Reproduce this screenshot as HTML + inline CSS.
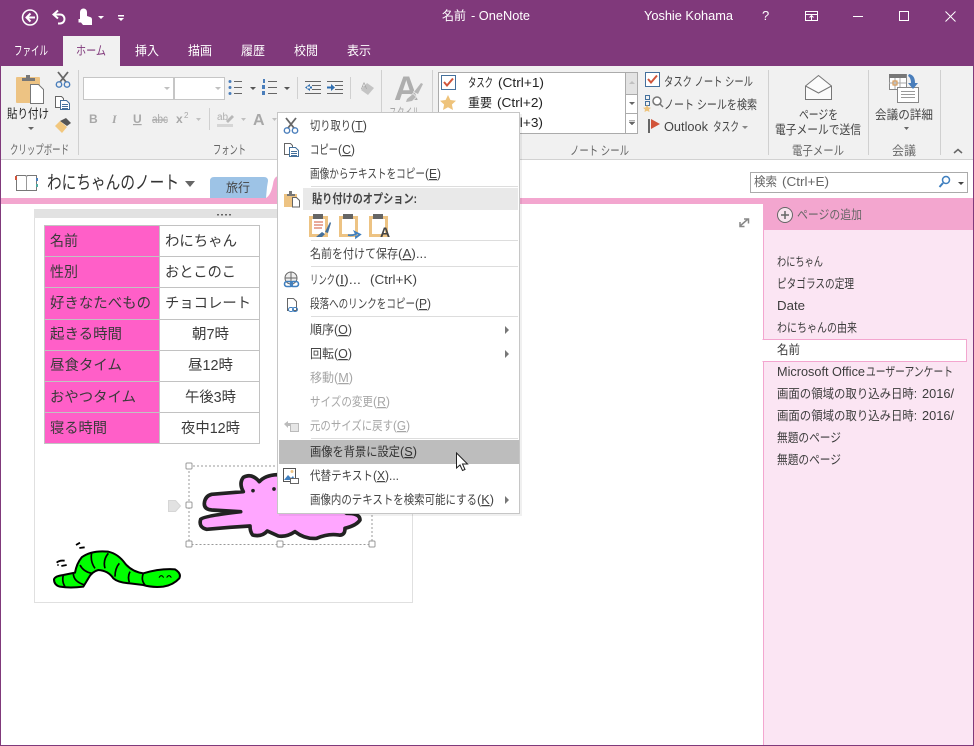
<!DOCTYPE html>
<html lang="ja"><head><meta charset="utf-8"><title>名前 - OneNote</title>
<style>
html,body{margin:0;padding:0;background:#fff;width:974px;height:746px;overflow:hidden}
svg{display:block}
text{font-family:"Liberation Sans","Noto Sans CJK JP",sans-serif;font-size:12.5px;fill:#444;white-space:pre}
.w{fill:#fff}.d{fill:#a6a6a6}.k{fill:#222}.g{fill:#666}.tb{font-size:14.5px;fill:#3a3a3a}.p{fill:#3c3c3c}
.u{text-decoration:underline}
</style></head><body>
<svg width="974" height="746" viewBox="0 0 974 746" xmlns="http://www.w3.org/2000/svg">
<defs>
<g id="sc"><path d="M2 0L10 10M12 0L4 10" stroke="#666" stroke-width="1.8" fill="none"/><circle cx="3" cy="12.5" r="2.7" fill="none" stroke="#4a7ebb" stroke-width="1.4"/><circle cx="11" cy="12.5" r="2.7" fill="none" stroke="#4a7ebb" stroke-width="1.4"/></g>
<g id="cp" fill="#fff" stroke="#666"><path d="M.5.5h6l2 2v9h-8z"/><path d="M5.5 4.500h6l3 3v6h-9z" stroke="#44709c"/><path d="M7 8.500h6M7 10.500h6M7 12.500h6" stroke="#44709c"/></g>
</defs>
<!-- title -->
<rect width="974" height="746" fill="#80397b"/>
<rect x="1" y="66" width="972" height="679" fill="#fff"/>
<g fill="none" stroke="#fff" stroke-width="1.500">
<circle cx="30" cy="17.500" r="7.500"/><path d="M35 17.500h-8M30.500 13.500l-4 4 4 4" stroke-width="2"/>
<path d="M58 10.500l-4.500 4 4.500 4M54 14.500h6c6 0 6 9 0 9h-2" stroke-width="2"/>
</g>
<path d="M80 19v-7a3 3 0 0 1 7 0v4l3 1c2 .5 2 2 2 3v5h-9l-2-2.500h-2.500v-3.500z" fill="#fff"/>
<path d="M98 16h6l-3 3zM118 15h6v1.500h-6zM118 18h6l-3 3z" fill="#fff"/>
<text class="w" x="442" y="20" textLength="24" lengthAdjust="spacingAndGlyphs">名前</text>
<text class="w" x="471" y="20" textLength="59" lengthAdjust="spacingAndGlyphs">- OneNote</text>
<text class="w" x="644" y="20" textLength="89" lengthAdjust="spacingAndGlyphs">Yoshie Kohama</text>
<text class="w" x="762" y="20" style="font-size:13px">?</text>
<g fill="none" stroke="#fff"><rect x="805.500" y="11.500" width="12" height="9"/><path d="M805 14.500h13M811.500 20v-4M809.500 17.500l2-2 2 2"/>
<path d="M853 16.500h10"/><rect x="899.500" y="11.500" width="9" height="9"/><path d="M945.500 11.500l10 10M955.500 11.500l-10 10"/></g>
<!-- tabs -->
<rect x="63" y="36" width="57" height="30" fill="#f1f1f1"/>
<text class="w" x="14" y="55" textLength="34" lengthAdjust="spacingAndGlyphs">ファイル</text>
<text x="76" y="55" textLength="30" lengthAdjust="spacingAndGlyphs" style="fill:#80397b">ホーム</text>
<text class="w" x="135" y="55" textLength="24" lengthAdjust="spacingAndGlyphs">挿入</text>
<text class="w" x="188" y="55" textLength="24" lengthAdjust="spacingAndGlyphs">描画</text>
<text class="w" x="241" y="55" textLength="24" lengthAdjust="spacingAndGlyphs">履歴</text>
<text class="w" x="294" y="55" textLength="24" lengthAdjust="spacingAndGlyphs">校閲</text>
<text class="w" x="347" y="55" textLength="24" lengthAdjust="spacingAndGlyphs">表示</text>
<!-- ribbon -->
<rect x="1" y="66" width="972" height="93" fill="#f1f1f1"/>
<rect x="1" y="159" width="972" height="1" fill="#d2d2d2"/>
<g fill="#d0d0d0"><rect x="78" y="70" width="1" height="85"/><rect x="432" y="70" width="1" height="85"/><rect x="768" y="70" width="1" height="85"/><rect x="868" y="70" width="1" height="85"/><rect x="940" y="70" width="1" height="85"/><rect x="297" y="77" width="1" height="22"/><rect x="350" y="77" width="1" height="22"/><rect x="381" y="70" width="1" height="85"/><rect x="209" y="108" width="1" height="22"/></g>
<!-- clipboard -->
<rect x="16" y="77" width="24" height="26" rx="1" fill="#edc383"/>
<path d="M22 81v-3h4v-3h4v3h5v3z" fill="#777"/>
<path d="M30.500 84.500h8l5 5v14h-13z" fill="#fff" stroke="#777"/>
<text class="k" x="7" y="118" textLength="42" lengthAdjust="spacingAndGlyphs">貼り付け</text>
<path d="M28 127h6l-3 3z" fill="#666"/>
<use href="#sc" x="56" y="72"/>
<use href="#cp" x="55" y="96"/>
<path d="M60 121l6-3 5 5-4 3z" fill="#555"/><path d="M55 126l5-5 7 6-5 6z" fill="#f2c77e"/>
<text class="g" x="10" y="154" textLength="59" lengthAdjust="spacingAndGlyphs">クリップボード</text>
<text class="g" x="213" y="154" textLength="33" lengthAdjust="spacingAndGlyphs">フォント</text>
<text class="g" x="570" y="155" textLength="59" lengthAdjust="spacingAndGlyphs">ノート シール</text>
<text class="g" x="792" y="155" textLength="52" lengthAdjust="spacingAndGlyphs">電子メール</text>
<text class="g" x="892" y="155" textLength="24" lengthAdjust="spacingAndGlyphs">会議</text>
<!-- font boxes -->
<rect x="83.500" y="77.500" width="90" height="22" fill="#fff" stroke="#c6c6c6"/>
<rect x="174.500" y="77.500" width="50" height="22" fill="#fff" stroke="#c6c6c6"/>
<path d="M164 87h6l-3 3zM215 87h6l-3 3z" fill="#c0c0c0"/>
<g fill="#4a7ebb"><circle cx="230" cy="81.500" r="1.500"/><circle cx="230" cy="87.500" r="1.500"/><circle cx="230" cy="93.500" r="1.500"/></g>
<path d="M234 81.500h8M234 87.500h8M234 93.500h8M268 81.500h9M268 87.500h9M268 93.500h9" stroke="#666"/>
<path d="M250 87h6l-3 3zM284 87h6l-3 3z" fill="#555"/>
<g fill="#4a7ebb"><rect x="263" y="79" width="2" height="4"/><rect x="262" y="85" width="3" height="4"/><rect x="262" y="91" width="3" height="4"/></g>
<path d="M312 85.500h9M312 89.500h9M335 85.500h8M335 89.500h8M327 81.500h16M327 93.500h16M305 81.500h16M305 93.500h16" stroke="#666"/>
<path d="M310 84l-5 3.500 5 3.500zM307 86.500h5v2h-5zM327 86.500h5v2h-5zM331 84l4 3.500-4 3.500z" fill="#2f6eb0"/>
<path d="M361 90l6-7 7 5-6 7z" fill="#c4c4c4"/><text x="361" y="89" style="font-size:9px;fill:#aaa">A</text>
<text x="89" y="123" style="font-weight:bold;fill:#a8a8a8;font-size:12px">B</text>
<text x="112" y="123" style="font-style:italic;font-weight:bold;fill:#a8a8a8;font-family:'Liberation Serif',serif;font-size:12px">I</text>
<text x="133" y="123" style="fill:#a8a8a8;font-weight:bold;text-decoration:underline;font-size:12px">U</text>
<text x="152" y="123" style="fill:#a8a8a8;text-decoration:line-through;font-size:11.500px" textLength="16" lengthAdjust="spacingAndGlyphs">abc</text>
<text x="176" y="123" style="fill:#a8a8a8;font-weight:bold;font-size:12px">x</text><text x="184" y="118" style="fill:#a8a8a8;font-size:8px">2</text>
<text x="217" y="120" style="fill:#b0b0b0;font-size:10px">ab</text>
<text x="253" y="125" style="fill:#a8a8a8;font-size:16px;font-weight:bold">A</text>
<path d="M217 124h16v3h-16z" fill="#d6d6d6"/><path d="M226 121l6-6 2 2-6 6z" fill="#b8b8b8"/>
<path d="M196 118h5l-2.500 3zM241 118h5l-2.500 3zM272 118h5l-2.500 3z" fill="#c0c0c0"/>
<!-- styles -->
<text x="394" y="100" style="font-size:34px;font-weight:bold;fill:#aeaeae">A</text>
<path d="M414 92l7-9 2 1-5 10zM407 99l6-5 3 3-4 4-6 1z" fill="#b6b6b6" stroke="#f1f1f1" stroke-width="1.500" paint-order="stroke"/>
<text class="d" x="389" y="117" textLength="31" lengthAdjust="spacingAndGlyphs">スタイル</text>
<!-- gallery -->
<rect x="438.500" y="72.500" width="187" height="61" fill="#fff" stroke="#ababab"/>
<rect x="625.500" y="72.500" width="12" height="61" fill="#fff" stroke="#ababab"/>
<rect x="626" y="73" width="11" height="21" fill="#e3e3e3"/>
<path d="M625 94.500h13M625 113.500h13" stroke="#ababab"/>
<path d="M629 84l3-3 3 3z" fill="#c0c0c0"/><path d="M629 102h6l-3 3z" fill="#666"/><path d="M629 120.500h6M629 122h6l-3 3z" fill="#666" stroke="#666" stroke-width=".5"/>
<rect x="441.500" y="75.500" width="14" height="14" fill="#fff" stroke="#44709c"/>
<path d="M444 82l3 3.500 6-7" fill="none" stroke="#d0543a" stroke-width="2"/>
<path d="M448 95l2.400 5 5.600.7-4.100 3.800 1.100 5.500-5-2.800-5 2.800 1.100-5.500-4.100-3.800 5.600-.7z" fill="#eec37b"/>
<text class="k" x="468" y="87" textLength="25" lengthAdjust="spacingAndGlyphs">タスク</text><text class="k" x="498" y="87" textLength="46" lengthAdjust="spacingAndGlyphs">(Ctrl+1)</text>
<text class="k" x="468" y="107" textLength="24" lengthAdjust="spacingAndGlyphs">重要</text><text class="k" x="497" y="107" textLength="46" lengthAdjust="spacingAndGlyphs">(Ctrl+2)</text>
<text class="k" x="468" y="127" textLength="24" lengthAdjust="spacingAndGlyphs">質問</text><text class="k" x="497" y="127" textLength="46" lengthAdjust="spacingAndGlyphs">(Ctrl+3)</text>
<!-- tags -->
<rect x="645.500" y="72.500" width="14" height="14" fill="#fff" stroke="#44709c"/>
<path d="M648 79l3 3.500 6-7" fill="none" stroke="#d0543a" stroke-width="2"/>
<text x="664" y="86" textLength="89" lengthAdjust="spacingAndGlyphs">タスク ノート シール</text>
<rect x="645.500" y="95.500" width="4" height="4" fill="none" stroke="#44709c"/><rect x="645.500" y="101.500" width="4" height="4" fill="none" stroke="#44709c"/>
<circle cx="657" cy="101" r="4" fill="#fff" stroke="#777" stroke-width="1.500"/><path d="M660 104l3 3" stroke="#777" stroke-width="1.500"/><path d="M647 105l1.500 2.500 2.500.3-2 1.700.5 2.500-2.500-1.300-2.500 1.300.5-2.500-2-1.700 2.500-.3z" fill="#eec37b"/>
<text x="664" y="109" textLength="93" lengthAdjust="spacingAndGlyphs">ノート シールを検索</text>
<rect x="648" y="119" width="2" height="14" fill="#666"/><path d="M651 119l9 5-9 5z" fill="#d2543a"/>
<text x="664" y="131" textLength="44" lengthAdjust="spacingAndGlyphs">Outlook</text><text x="713" y="131" textLength="26" lengthAdjust="spacingAndGlyphs">タスク</text>
<path d="M742 126h6l-3 3z" fill="#888"/>
<!-- mail -->
<path d="M805.500 86l13-10.500 13 10.500v13.500h-26z" fill="#fbfbfb" stroke="#777"/><path d="M805.500 86l13 7 13-7" fill="none" stroke="#777"/>
<text x="799" y="119" textLength="39" lengthAdjust="spacingAndGlyphs">ページを</text>
<text x="775" y="134" textLength="86" lengthAdjust="spacingAndGlyphs">電子メールで送信</text>
<!-- meeting -->
<rect x="889.500" y="74.500" width="17" height="15" fill="#fff" stroke="#888"/><rect x="889" y="74" width="17" height="4" fill="#777"/>
<path d="M895 78v11M900 78v11M889 83h17" stroke="#aaa"/><rect x="893" y="81" width="4" height="4" fill="none" stroke="#d08a3c"/>
<rect x="897.500" y="87.500" width="21" height="15" fill="#fff" stroke="#888"/><path d="M901 91.500h14M901 94.500h14M901 97.500h14" stroke="#999"/>
<path d="M909 74c5 1 6 5 6 9h3l-5 6-5-6h3c0-3-1-6-3-7z" fill="#4a7ebb"/>
<text x="875" y="119" textLength="58" lengthAdjust="spacingAndGlyphs">会議の詳細</text>
<path d="M904 127h5l-2.500 3z" fill="#666"/>
<path d="M954 153l4-3.500 4 3.500" fill="none" stroke="#666" stroke-width="1.500"/>
<!-- nav -->
<path d="M16.500 175.500h9l1 1 1-1h9v15h-20z" fill="#fff" stroke="#777"/><path d="M26.500 176v14" stroke="#999"/>
<rect x="15" y="176" width="2" height="4" fill="#d2543a"/><rect x="36" y="178" width="2" height="3" fill="#4a7ebb"/><rect x="36" y="184" width="2" height="3" fill="#4fa9a0"/>
<text x="47" y="189" textLength="132" lengthAdjust="spacingAndGlyphs" style="font-size:18.500px;fill:#333">わにちゃんのノート</text>
<path d="M185 181h10l-5 6z" fill="#666"/>
<path d="M210 198v-17q0-4 4-4h50q4 0 4 4l-1 6 -1 11z" fill="#9dc3e6"/>
<text x="226" y="192" textLength="24" lengthAdjust="spacingAndGlyphs" style="fill:#444">旅行</text>
<path d="M266 198q5-3 7-14 1-8 6-8h20v22z" fill="#f3a6cf"/>
<rect x="750.500" y="172.500" width="217" height="20" fill="#fff" stroke="#ababab"/>
<text class="g" x="754" y="186" textLength="23" lengthAdjust="spacingAndGlyphs">検索</text><text class="g" x="782" y="186" textLength="47" lengthAdjust="spacingAndGlyphs">(Ctrl+E)</text>
<circle cx="946" cy="180" r="3.500" fill="none" stroke="#3f7fbf" stroke-width="1.500"/><path d="M943 183l-3.500 4" stroke="#3f7fbf" stroke-width="2"/>
<path d="M958 182h6l-3 3z" fill="#444"/>
<rect x="1" y="198" width="972" height="6" fill="#f3a6cf"/>
<!-- sidebar -->
<rect x="763" y="198" width="210" height="32" fill="#f3a6cf"/>
<rect x="763" y="230" width="210" height="515" fill="#fbe5f3"/>
<rect x="763" y="230" width="1" height="515" fill="#f3a6cf"/>
<circle cx="785" cy="215" r="7.500" fill="#f8e3ee" stroke="#666"/><path d="M781 215h8M785 211v8" stroke="#666" stroke-width="1.500"/>
<text class="g" x="797" y="219" textLength="65" lengthAdjust="spacingAndGlyphs">ページの追加</text>
<rect x="763" y="339.500" width="203.500" height="22" fill="#fff" stroke="#f3a6cf"/>
<rect x="762" y="340" width="3" height="21" fill="#fff"/>
<text class="p" x="777" y="266" textLength="46" lengthAdjust="spacingAndGlyphs">わにちゃん</text>
<text class="p" x="777" y="288" textLength="77" lengthAdjust="spacingAndGlyphs">ピタゴラスの定理</text>
<text class="p" x="777" y="310" textLength="28" lengthAdjust="spacingAndGlyphs">Date</text>
<text class="p" x="777" y="332" textLength="80" lengthAdjust="spacingAndGlyphs">わにちゃんの由来</text>
<text class="p" x="777" y="354" textLength="23" lengthAdjust="spacingAndGlyphs">名前</text>
<text class="p" x="777" y="376" textLength="88" lengthAdjust="spacingAndGlyphs">Microsoft Office</text><text class="p" x="866" y="376" textLength="87" lengthAdjust="spacingAndGlyphs">ユーザーアンケート</text>
<text class="p" x="777" y="398" textLength="140" lengthAdjust="spacingAndGlyphs">画面の領域の取り込み日時:</text><text class="p" x="922" y="398" textLength="32" lengthAdjust="spacingAndGlyphs">2016/</text>
<text class="p" x="777" y="420" textLength="140" lengthAdjust="spacingAndGlyphs">画面の領域の取り込み日時:</text><text class="p" x="922" y="420" textLength="32" lengthAdjust="spacingAndGlyphs">2016/</text>
<text class="p" x="777" y="442" textLength="64" lengthAdjust="spacingAndGlyphs">無題のページ</text>
<text class="p" x="777" y="464" textLength="64" lengthAdjust="spacingAndGlyphs">無題のページ</text>
<!-- note -->
<path d="M740 226l8-7M744 219h4.500v4.500M740 222v4.500h4.500" fill="none" stroke="#888" stroke-width="1.500"/>
<rect x="34.500" y="209.500" width="378" height="393" fill="#fff" stroke="#e0e0e0"/>
<rect x="34" y="209" width="379" height="9" fill="#e2e2e2"/>
<path d="M217 214h2v1.500h-2zM221 214h2v1.500h-2zM225 214h2v1.500h-2zM229 214h2v1.500h-2z" fill="#666"/>
<!-- table -->
<rect x="44.500" y="225.500" width="115" height="218" fill="#ff5fc8"/>
<g stroke="#c2c2c2" fill="none"><rect x="44.500" y="225.500" width="215" height="218"/><path d="M159.500 225v219M44 256.500h216M44 287.500h216M44 319.500h216M44 350.500h216M44 381.500h216M44 412.500h216"/></g>
<text class="tb" x="50" y="246" textLength="28" lengthAdjust="spacingAndGlyphs">名前</text>
<text class="tb" x="50" y="277" textLength="28" lengthAdjust="spacingAndGlyphs">性別</text>
<text class="tb" x="50" y="308" textLength="101" lengthAdjust="spacingAndGlyphs">好きなたべもの</text>
<text class="tb" x="50" y="339" textLength="72" lengthAdjust="spacingAndGlyphs">起きる時間</text>
<text class="tb" x="50" y="370" textLength="72" lengthAdjust="spacingAndGlyphs">昼食タイム</text>
<text class="tb" x="50" y="402" textLength="86" lengthAdjust="spacingAndGlyphs">おやつタイム</text>
<text class="tb" x="50" y="433" textLength="57" lengthAdjust="spacingAndGlyphs">寝る時間</text>
<text class="tb" x="165" y="246" textLength="72" lengthAdjust="spacingAndGlyphs">わにちゃん</text>
<text class="tb" x="165" y="277" textLength="71" lengthAdjust="spacingAndGlyphs">おとこのこ</text>
<text class="tb" x="165" y="308" textLength="86" lengthAdjust="spacingAndGlyphs">チョコレート</text>
<text class="tb" x="192" y="339" textLength="37" lengthAdjust="spacingAndGlyphs">朝7時</text>
<text class="tb" x="188" y="370" textLength="45" lengthAdjust="spacingAndGlyphs">昼12時</text>
<text class="tb" x="185" y="402" textLength="51" lengthAdjust="spacingAndGlyphs">午後3時</text>
<text class="tb" x="181" y="433" textLength="59" lengthAdjust="spacingAndGlyphs">夜中12時</text>
<!-- croc -->
<path d="M168.500 500.500h7l5 5.500-5 5.500h-7z" fill="#e2e2e2" stroke="#d6d6d6"/>
<rect x="189" y="466" width="183" height="78.500" fill="none" stroke="#999" stroke-dasharray="2 2"/>
<g transform="translate(30 450) scale(.33333)">
<path d="M523 160Q525 138 545 133L640 125Q626 100 640 82Q665 68 688 95Q705 76 740 74L800 90L950 190Q990 190 990 210Q980 226 945 235Q945 258 925 255Q895 250 860 265Q825 268 795 245Q770 262 745 258L712 243Q695 262 668 255Q660 245 660 228L600 232L530 238Q505 232 512 208Q520 198 632 185L545 180Q522 178 523 160Z" fill="#ffa6ff" stroke="#222" stroke-width="11" stroke-linejoin="round"/>
<circle cx="669" cy="122" r="5.500" fill="#222"/><circle cx="732" cy="117" r="5.500" fill="#222"/>
<path d="M72 388Q75 378 100 375L135 368Q140 340 155 322Q185 300 235 305Q265 312 285 340Q305 365 340 370Q390 355 435 358Q455 370 448 385Q430 405 400 410Q365 413 340 405L300 400Q265 398 250 385Q235 362 205 360Q185 365 175 385L160 410Q120 415 90 410Q72 405 72 388Z" fill="#00ff00" stroke="#000" stroke-width="6" stroke-linejoin="round"/>
<path d="M100 375Q95 395 105 410M130 370Q130 395 165 405M150 345Q160 365 185 370M185 308Q180 335 195 355M235 310Q218 330 225 355M268 340Q255 355 255 380M300 365Q292 380 298 397M340 370Q332 390 345 405" fill="none" stroke="#000" stroke-width="5"/>
<path d="M387 383q7-12 14 0M410 383q7-12 14 0" fill="none" stroke="#000" stroke-width="3"/>
<path d="M138 285l12-7M148 294l16-2M80 338q8-8 24-6M82 345l4 0M94 348l16-3" stroke="#000" stroke-width="5.500" fill="none"/>
</g>
<g fill="#fff" stroke="#999"><rect x="186" y="463" width="6" height="6" rx="1"/><rect x="186" y="502" width="6" height="6" rx="1"/><rect x="186" y="541" width="6" height="6" rx="1"/><rect x="277" y="541" width="6" height="6" rx="1"/><rect x="369" y="541" width="6" height="6" rx="1"/></g>
<!-- menu -->
<rect x="279" y="114" width="243" height="402" fill="#000" opacity=".06"/>
<rect x="277.500" y="112.500" width="242" height="401" fill="#fff" stroke="#c6c6c6"/>
<use href="#sc" x="284" y="118"/>
<use href="#cp" x="284" y="143"/>
<text x="310" y="130" textLength="41" lengthAdjust="spacingAndGlyphs">切り取り</text><text x="351" y="130" textLength="16" lengthAdjust="spacingAndGlyphs">(<tspan class="u">T</tspan>)</text>
<text x="310" y="154" textLength="28" lengthAdjust="spacingAndGlyphs">コピー</text><text x="338" y="154" textLength="17" lengthAdjust="spacingAndGlyphs">(<tspan class="u">C</tspan>)</text>
<text x="310" y="178" textLength="115" lengthAdjust="spacingAndGlyphs">画像からテキストをコピー</text><text x="425" y="178" textLength="16" lengthAdjust="spacingAndGlyphs">(<tspan class="u">E</tspan>)</text>
<rect x="311" y="186" width="207" height="1" fill="#ddd"/>
<rect x="303" y="188" width="215" height="22" fill="#e9e9e9"/>
<rect x="284" y="194" width="13" height="13" fill="#edc383"/><path d="M287 196v-2h2v-3h3v3h3v2z" fill="#777"/><path d="M292.500 197.500h4l3 3v6.500h-7z" fill="#fff" stroke="#666"/>
<text x="312" y="203" textLength="105" lengthAdjust="spacingAndGlyphs" style="font-weight:bold">貼り付けのオプション:</text>
<!-- paste options -->
<rect x="309" y="216" width="19" height="21" fill="#edc383"/><rect x="312" y="219" width="13" height="15" fill="#fff"/><path d="M313 214h10v5h-10z" fill="#666"/>
<path d="M314 222h9M314 225h9M314 228h8" stroke="#d2543a"/><path d="M325 232l5-10 1 1-3 10zM316 237l6-5 3 2-3 3z" fill="#44709c"/>
<rect x="339" y="216" width="19" height="21" fill="#edc383"/><rect x="342" y="219" width="13" height="15" fill="#fff"/><path d="M343 214h10v5h-10z" fill="#666"/>
<path d="M348 235q4 1 8-1l-1-2 5 2.500-4 3v-2" fill="none" stroke="#3f7fbf" stroke-width="1.800"/>
<rect x="369" y="216" width="19" height="21" fill="#edc383"/><rect x="372" y="219" width="13" height="15" fill="#fff"/><path d="M373 214h10v5h-10z" fill="#666"/>
<text x="380" y="237" style="font-size:14px;font-weight:bold;fill:#444">A</text>
<rect x="311" y="240" width="207" height="1" fill="#ddd"/>
<text x="310" y="258" textLength="88" lengthAdjust="spacingAndGlyphs">名前を付けて保存</text><text x="398" y="258" textLength="29" lengthAdjust="spacingAndGlyphs">(<tspan class="u">A</tspan>)...</text>
<rect x="311" y="266" width="207" height="1" fill="#ddd"/>
<circle cx="291" cy="278" r="6" fill="#eee" stroke="#666"/><path d="M285 278h12M291 272v12" stroke="#666"/>
<rect x="284.500" y="281.500" width="8" height="5" rx="2.500" fill="none" stroke="#3f7fbf" stroke-width="1.600"/><rect x="290.500" y="281.500" width="8" height="5" rx="2.500" fill="none" stroke="#3f7fbf" stroke-width="1.600"/>
<text x="310" y="284" textLength="25" lengthAdjust="spacingAndGlyphs">リンク</text><text x="335" y="284" textLength="26" lengthAdjust="spacingAndGlyphs">(<tspan class="u">I</tspan>)...</text><text x="370" y="284" textLength="47" lengthAdjust="spacingAndGlyphs">(Ctrl+K)</text>
<path d="M287.500 298.500h6l3 3v9h-9z" fill="#fff" stroke="#666"/><rect x="288.500" y="307.500" width="5" height="4" rx="2" fill="#fff" stroke="#3f7fbf"/><rect x="292.500" y="307.500" width="5" height="4" rx="2" fill="none" stroke="#3f7fbf"/>
<text x="310" y="308" textLength="105" lengthAdjust="spacingAndGlyphs">段落へのリンクをコピー</text><text x="415" y="308" textLength="16" lengthAdjust="spacingAndGlyphs">(<tspan class="u">P</tspan>)</text>
<rect x="311" y="316" width="207" height="1" fill="#ddd"/>
<text x="310" y="334" textLength="24" lengthAdjust="spacingAndGlyphs">順序</text><text x="334" y="334" textLength="18" lengthAdjust="spacingAndGlyphs">(<tspan class="u">O</tspan>)</text>
<path d="M505 326l4 4-4 4z" fill="#777"/>
<text x="310" y="358" textLength="24" lengthAdjust="spacingAndGlyphs">回転</text><text x="334" y="358" textLength="18" lengthAdjust="spacingAndGlyphs">(<tspan class="u">O</tspan>)</text>
<path d="M505 350l4 4-4 4z" fill="#777"/>
<text class="d" x="310" y="382" textLength="24" lengthAdjust="spacingAndGlyphs">移動</text><text class="d" x="334" y="382" textLength="19" lengthAdjust="spacingAndGlyphs">(<tspan class="u">M</tspan>)</text>
<text class="d" x="310" y="406" textLength="63" lengthAdjust="spacingAndGlyphs">サイズの変更</text><text class="d" x="373" y="406" textLength="17" lengthAdjust="spacingAndGlyphs">(<tspan class="u">R</tspan>)</text>
<rect x="290.500" y="423.500" width="8" height="8" fill="#e6e6e6" stroke="#bbb"/><path d="M284 424l4-3v2h3v3h-3v2z" fill="#bbb"/>
<text class="d" x="310" y="430" textLength="83" lengthAdjust="spacingAndGlyphs">元のサイズに戻す</text><text class="d" x="393" y="430" textLength="17" lengthAdjust="spacingAndGlyphs">(<tspan class="u">G</tspan>)</text>
<rect x="311" y="438" width="207" height="1" fill="#ddd"/>
<rect x="279" y="440" width="240" height="24" fill="#bdbdbd"/>
<text x="310" y="456" textLength="90" lengthAdjust="spacingAndGlyphs" style="fill:#333">画像を背景に設定</text><text x="400" y="456" textLength="17" lengthAdjust="spacingAndGlyphs" style="fill:#333">(<tspan class="u">S</tspan>)</text>
<rect x="283.500" y="468.500" width="12" height="13" fill="#fff" stroke="#555"/><path d="M284 480l4-5 3 3 2-2 2 4z" fill="#3f7fbf"/><circle cx="292" cy="471.500" r="1.500" fill="#edc383"/><rect x="290.500" y="478.500" width="8" height="5" fill="#fff" stroke="#666"/>
<text x="310" y="480" textLength="63" lengthAdjust="spacingAndGlyphs">代替テキスト</text><text x="373" y="480" textLength="26" lengthAdjust="spacingAndGlyphs">(<tspan class="u">X</tspan>)...</text>
<text x="310" y="504" textLength="167" lengthAdjust="spacingAndGlyphs">画像内のテキストを検索可能にする</text><text x="477" y="504" textLength="17" lengthAdjust="spacingAndGlyphs">(<tspan class="u">K</tspan>)</text>
<path d="M505 496l4 4-4 4z" fill="#777"/>
<!-- cursor -->
<path d="M456.500 453v15l3.500-3 2.500 5.500 2.500-1-2.500-5.500h5z" fill="#fff" stroke="#222"/>
</svg>
</body></html>
